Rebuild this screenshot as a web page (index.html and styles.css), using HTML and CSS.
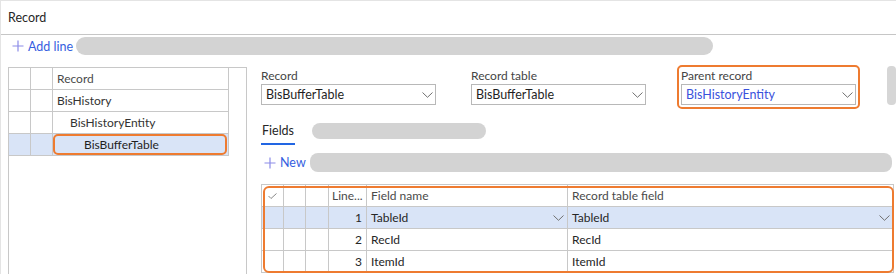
FILE: index.html
```html
<!DOCTYPE html>
<html lang="en">
<head>
<meta charset="utf-8">
<title>Record</title>
<link rel="stylesheet" href="styles.css">
</head>
<body>
<div class="page">
  <header class="titlebar"><span class="title">Record</span></header>

  <div class="toolbar">
    <span class="cmd">
      <svg class="plus" viewBox="0 0 12 12" width="12" height="12"><path d="M6 0.5V11.5M0.5 6H11.5" stroke="#8c8ce8" stroke-width="1.2" fill="none"/></svg>
      <span class="cmd-text">Add line</span>
    </span>
    <span class="pill pill-toolbar"></span>
  </div>

  <div class="main">
    <div class="tree-panel">
      <div class="tree">
        <div class="trow">
          <span class="tc tc-sel"></span><span class="tc tc-sel"></span><span class="tc tc-name thead">Record</span>
        </div>
        <div class="trow">
          <span class="tc tc-sel"></span><span class="tc tc-sel"></span><span class="tc tc-name lvl0">BisHistory</span>
        </div>
        <div class="trow">
          <span class="tc tc-sel"></span><span class="tc tc-sel"></span><span class="tc tc-name lvl1">BisHistoryEntity</span>
        </div>
        <div class="trow selected">
          <span class="tc tc-sel"></span><span class="tc tc-sel"></span><span class="tc tc-name lvl2 marked">BisBufferTable</span>
        </div>
      </div>
    </div>

    <div class="detail">
      <div class="fields-row">
        <div class="field">
          <label class="flabel">Record</label>
          <div class="select"><span class="sval">BisBufferTable</span><svg class="chev" viewBox="0 0 11 6" width="11" height="6"><path d="M0.5 0.5L5.5 5.3L10.5 0.5" stroke="#707070" fill="none"/></svg></div>
        </div>
        <div class="field">
          <label class="flabel">Record table</label>
          <div class="select"><span class="sval">BisBufferTable</span><svg class="chev" viewBox="0 0 11 6" width="11" height="6"><path d="M0.5 0.5L5.5 5.3L10.5 0.5" stroke="#707070" fill="none"/></svg></div>
        </div>
        <div class="field marked-field">
          <label class="flabel">Parent record</label>
          <div class="select"><span class="sval link">BisHistoryEntity</span><svg class="chev" viewBox="0 0 11 6" width="11" height="6"><path d="M0.5 0.5L5.5 5.3L10.5 0.5" stroke="#707070" fill="none"/></svg></div>
        </div>
        <span class="vscroll"></span>
      </div>

      <div class="tabs">
        <span class="tab active">Fields</span>
        <span class="pill pill-tab"></span>
      </div>

      <div class="toolbar2">
        <span class="cmd">
          <svg class="plus" viewBox="0 0 12 12" width="12" height="12"><path d="M6 0.5V11.5M0.5 6H11.5" stroke="#8c8ce8" stroke-width="1.2" fill="none"/></svg>
          <span class="cmd-text">New</span>
        </span>
        <span class="pill pill-new"></span>
      </div>

      <div class="grid">
        <div class="grow ghead">
          <span class="gc g1"><svg class="check" viewBox="0 0 9 6" width="9" height="6"><path d="M0.5 3L3 5.5L8.5 0.5" stroke="#8a8a8a" fill="none"/></svg></span>
          <span class="gc g2"></span>
          <span class="gc g3"></span>
          <span class="gc g4 num">Line...</span>
          <span class="gc g5">Field name</span>
          <span class="gc g6">Record table field</span>
        </div>
        <div class="grow selected">
          <span class="gc g1"></span><span class="gc g2"></span><span class="gc g3"></span>
          <span class="gc g4 num">1</span>
          <span class="gc g5 dd">TableId<svg class="chev" viewBox="0 0 11 6" width="11" height="6"><path d="M0.5 0.5L5.5 5.3L10.5 0.5" stroke="#707070" fill="none"/></svg></span>
          <span class="gc g6 dd">TableId<svg class="chev" viewBox="0 0 11 6" width="11" height="6"><path d="M0.5 0.5L5.5 5.3L10.5 0.5" stroke="#707070" fill="none"/></svg></span>
        </div>
        <div class="grow">
          <span class="gc g1"></span><span class="gc g2"></span><span class="gc g3"></span>
          <span class="gc g4 num">2</span>
          <span class="gc g5">RecId</span>
          <span class="gc g6">RecId</span>
        </div>
        <div class="grow">
          <span class="gc g1"></span><span class="gc g2"></span><span class="gc g3"></span>
          <span class="gc g4 num">3</span>
          <span class="gc g5">ItemId</span>
          <span class="gc g6">ItemId</span>
        </div>
        <span class="grid-mark"></span>
      </div>
    </div>
  </div>
</div>
</body>
</html>
```

FILE: styles.css
```css
* { box-sizing: border-box; }

html, body {
  margin: 0;
  padding: 0;
  background: #ffffff;
  overflow: hidden;
}

body {
  font-family: Lato, "Open Sans", sans-serif;
  font-size: 12px;
  color: #262626;
}

.page {
  width: 896px;
  height: 274px;
  border-top: 1px solid #e4e4e4;
  border-left: 1px solid #e4e4e4;
  overflow: hidden;
}

/* title bar */
.titlebar {
  height: 34px;
  border-bottom: 1px solid #c6c6c6;
  display: flex;
  align-items: center;
  padding-left: 7px;
  padding-bottom: 1px;
}
.title {
  font-size: 12.5px;
  color: #262626;
}

/* toolbars */
.toolbar {
  display: flex;
  align-items: center;
  height: 18px;
  margin-top: 2px;
  padding-left: 11px;
}
.cmd {
  display: inline-flex;
  align-items: center;
  gap: 4px;
  color: #3560e0;
  font-size: 12.5px;
}
.plus { display: block; }

.pill {
  display: block;
  background: #d3d3d3;
  border-radius: 9px;
}
.pill-toolbar {
  margin-left: 3px;
  width: 637px;
  height: 18px;
}

/* main */
.main {
  display: flex;
  margin-top: 12px;
  height: 207px;
}

.tree-panel {
  margin-left: 7px;
  width: 239px;
  height: 100%;
  border: 1px solid #c8c8c8;
  border-bottom: none;
}
.tree { width: 220px; }
.trow {
  display: flex;
  height: 22px;
  border-bottom: 1px solid #c8c8c8;
}
.trow.selected { background: #d9e4f7; }
.tc {
  border-right: 1px solid #c8c8c8;
  display: flex;
  align-items: center;
}
.tc-sel { width: 22px; }
.tc-name {
  width: 176px;
  padding-left: 4px;
  color: #333;
  position: relative;
}
.thead { color: #4a4a4a; }
.lvl1 { padding-left: 17px; }
.lvl2 { padding-left: 31px; color: #1f1f1f; }
.marked::after {
  content: "";
  position: absolute;
  top: 0; left: 0; right: 1px; bottom: 0;
  border: 2px solid #ee7b30;
  border-radius: 5px;
}

/* detail */
.detail {
  margin-left: 14px;
  width: 635px;
}

.fields-row {
  display: flex;
  gap: 35px;
  position: relative;
}
.field {
  width: 175px;
  display: flex;
  flex-direction: column;
  position: relative;
}
.flabel {
  height: 15px;
  line-height: 15px;
  color: #444;
  margin-top: 1px;
  margin-bottom: 1px;
}
.select {
  height: 21px;
  border: 1px solid #b8b8b8;
  display: flex;
  align-items: center;
  justify-content: space-between;
  padding-left: 4px;
  padding-right: 2px;
  font-size: 12.5px;
  color: #1f1f1f;
}
.link { color: #3a52dc; }
.chev { display: block; }
.marked-field::after {
  content: "";
  position: absolute;
  top: -2px; left: -4px; right: -4px; bottom: -4px;
  border: 2px solid #ee7b30;
  border-radius: 5px;
}
.vscroll {
  position: absolute;
  right: 0;
  top: -1px;
  width: 9px;
  height: 39px;
  background: #d6d6d6;
  border-radius: 4px;
}

/* tabs */
.tabs {
  display: flex;
  align-items: flex-start;
  margin-top: 14px;
}
.tab {
  height: 26px;
  line-height: 24px;
  padding: 0 1px;
  border-bottom: 2px solid #2266e3;
  color: #262626;
  font-size: 12.5px;
}
.pill-tab {
  margin-left: 17px;
  margin-top: 4px;
  width: 174px;
  height: 16px;
  border-radius: 8px;
}

.toolbar2 {
  display: flex;
  align-items: center;
  height: 19px;
  margin-top: 8px;
  padding-left: 3px;
}
.pill-new {
  margin-left: 4px;
  width: 582px;
  height: 19px;
  border-radius: 8px;
}

/* grid */
.grid {
  margin-top: 12px;
  width: 633px;
  border-left: 1px solid #c8c8c8;
  border-top: 1px solid #c8c8c8;
  position: relative;
}
.grow {
  display: flex;
  height: 22px;
  border-bottom: 1px solid #c8c8c8;
}
.grow.selected { background: #d9e4f7; }
.gc {
  border-right: 1px solid #c8c8c8;
  display: flex;
  align-items: center;
  padding: 0 4px;
  color: #262626;
  white-space: nowrap;
  overflow: hidden;
}
.ghead .gc { color: #4a4a4a; }
.g1 { width: 22px; justify-content: center; padding: 0; }
.g2 { width: 22px; }
.g3 { width: 23px; }
.g4 { width: 38px; }
.g5 { width: 201px; }
.g6 { width: 326px; }
.num { justify-content: flex-end; padding-right: 4px; }
.ghead .num { justify-content: flex-start; padding-left: 3px; }
.dd { justify-content: space-between; padding-right: 3px; }
.grid-mark {
  position: absolute;
  left: 1px;
  top: 1px;
  right: 0;
  height: 87px;
  border: 2px solid #ee7b30;
  border-radius: 6px;
  pointer-events: none;
}
```
